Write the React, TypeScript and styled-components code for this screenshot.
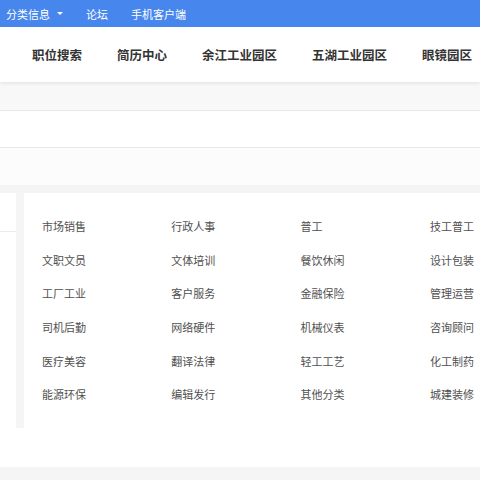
import React from "react";
import styled, { createGlobalStyle } from "styled-components";

const GlobalStyle = createGlobalStyle`
  html, body {
    margin: 0;
    padding: 0;
    background: #ffffff;
    font-family: "Noto Sans CJK SC", "Noto Sans", sans-serif;
  }
`;

const Page = styled.div`
  width: 480px;
  height: 480px;
  overflow: hidden;
  display: flex;
  flex-direction: column;
  background: #f5f5f5;
`;

const TopBar = styled.div`
  height: 27px;
  flex-shrink: 0;
  background: #4787ed;
  display: flex;
  align-items: center;
  gap: 23px;
  padding-left: 6px;
  color: #ffffff;
  font-size: 11px;
`;

const TopLink = styled.span`
  display: flex;
  align-items: center;
  gap: 7px;
  white-space: nowrap;
`;

const Caret = styled.i`
  width: 0;
  height: 0;
  border-left: 3px solid transparent;
  border-right: 3px solid transparent;
  border-top: 3px solid #ffffff;
`;

const NavBar = styled.div`
  height: 55px;
  flex-shrink: 0;
  background: #ffffff;
  box-shadow: 0 2px 3px rgba(0, 0, 0, 0.07);
  display: flex;
  align-items: center;
  gap: 35px;
  padding-left: 32px;
  position: relative;
  z-index: 1;
`;

const NavItem = styled.span`
  font-size: 12.5px;
  font-weight: 700;
  color: #333333;
  white-space: nowrap;
`;

const Band = styled.div<{ $h: number; $bg: string; $border?: boolean }>`
  height: ${({ $h }) => $h}px;
  flex-shrink: 0;
  background: ${({ $bg }) => $bg};
  border-bottom: ${({ $border }) => ($border ? "1px solid #e9e9e9" : "none")};
`;

const Section = styled.div`
  height: 274px;
  flex-shrink: 0;
  background: #ffffff;
  display: flex;
`;

const SidePanel = styled.div`
  width: 16px;
  height: 235px;
  flex-shrink: 0;
  display: flex;
  flex-direction: column;
`;

const SideHead = styled.div`
  height: 38px;
  border-bottom: 1px solid #ededed;
`;

const Divider = styled.div`
  width: 8px;
  height: 235px;
  flex-shrink: 0;
  background: #f5f5f5;
`;

const Grid = styled.div`
  flex: 1;
  overflow: hidden;
  display: grid;
  grid-template-columns: repeat(5, 129.3px);
  grid-auto-rows: 33.7px;
  align-items: center;
  padding: 16px 0 0 18px;
  align-content: start;
`;

const Cat = styled.span`
  font-size: 11px;
  color: #505050;
  white-space: nowrap;
`;

const navItems = ["职位搜索", "简历中心", "余江工业园区", "五湖工业园区", "眼镜园区"];

const categories = [
  ["市场销售", "行政人事", "普工", "技工普工"],
  ["文职文员", "文体培训", "餐饮休闲", "设计包装"],
  ["工厂工业", "客户服务", "金融保险", "管理运营"],
  ["司机后勤", "网络硬件", "机械仪表", "咨询顾问"],
  ["医疗美容", "翻译法律", "轻工工艺", "化工制药"],
  ["能源环保", "编辑发行", "其他分类", "城建装修"],
];

export default function App() {
  return (
    <>
      <GlobalStyle />
      <Page>
        <TopBar>
          <TopLink>
            分类信息
            <Caret />
          </TopLink>
          <TopLink>论坛</TopLink>
          <TopLink>手机客户端</TopLink>
        </TopBar>
        <NavBar>
          {navItems.map((n) => (
            <NavItem key={n}>{n}</NavItem>
          ))}
        </NavBar>
        <Band $h={28} $bg="#f8f8f8" $border />
        <Band $h={36} $bg="#ffffff" $border />
        <Band $h={37} $bg="#fcfcfc" />
        <Band $h={8} $bg="#f4f4f4" />
        <Section>
          <SidePanel>
            <SideHead />
          </SidePanel>
          <Divider />
          <Grid>
            {categories.map((row, i) => (
              <React.Fragment key={i}>
                {row.map((c) => (
                  <Cat key={c}>{c}</Cat>
                ))}
                <span />
              </React.Fragment>
            ))}
          </Grid>
        </Section>
        <Band $h={13} $bg="#f5f5f5" />
      </Page>
    </>
  );
}
